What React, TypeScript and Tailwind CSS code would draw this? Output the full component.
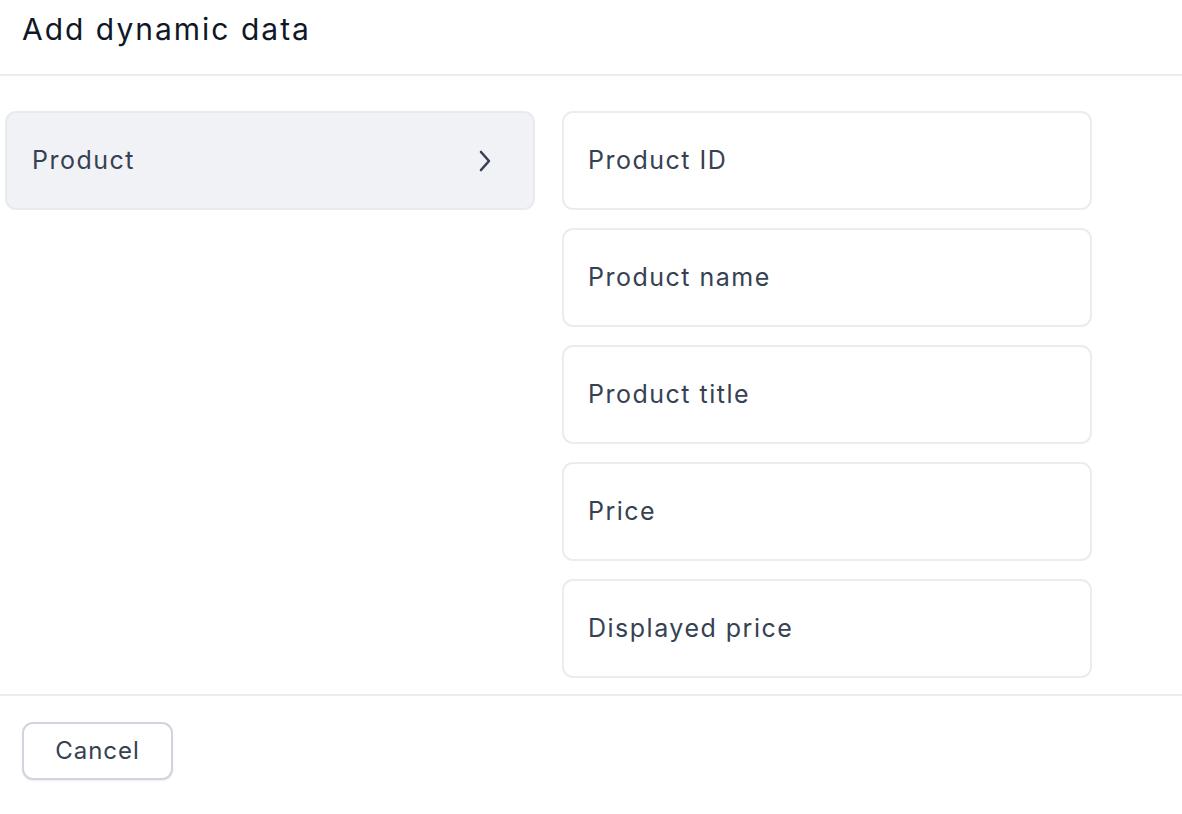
import React from "react";

const fields = ["Product ID", "Product name", "Product title", "Price", "Displayed price"];

function ChevronRight() {
  return (
    <svg width="16" height="24" viewBox="0 0 16 24" fill="none" stroke="currentColor" strokeWidth="2.6" strokeLinecap="round" strokeLinejoin="round">
      <path d="M4 3 L12 12 L4 21" />
    </svg>
  );
}

export default function App() {
  return (
    <div className="w-[1182px] h-[814px] bg-white flex flex-col overflow-hidden" style={{ fontFamily: "Inter, 'Noto Sans', sans-serif" }}>
      <header className="h-[76px] shrink-0 border-b-2 border-[#ebecf0] px-[22px] flex items-start pt-[9px]">
        <h1 className="text-[30px] leading-[40px] text-[#101828] font-normal tracking-[2px]">Add dynamic data</h1>
      </header>
      <main className="h-[618px] shrink-0 flex gap-[27px] pl-[5px] pt-[35px]">
        <div className="w-[530px]">
          <button className="w-full h-[99px] rounded-[11px] bg-[#f1f2f6] border-2 border-[#e9eaef] flex items-center justify-between pl-[25px] pr-[40px] text-[#364152]">
            <span className="text-[25px] tracking-[1.5px]">Product</span>
            <ChevronRight />
          </button>
        </div>
        <div className="w-[530px] flex flex-col gap-[18px]">
          {fields.map((f) => (
            <div key={f} className="h-[99px] rounded-[11px] border-2 border-[#ebecf1] bg-white flex items-center pl-[24px] text-[25px] tracking-[1.5px] text-[#364152]">
              {f}
            </div>
          ))}
        </div>
      </main>
      <footer className="border-t-2 border-[#ebecf0] px-[22px] pt-[26px]">
        <button className="w-[151px] h-[58px] rounded-[11px] border-2 border-[#d0d5dd] bg-white shadow-[0_1px_2px_rgba(16,24,40,0.08)] text-[24px] tracking-[1px] text-[#364152]">
          Cancel
        </button>
      </footer>
    </div>
  );
}
